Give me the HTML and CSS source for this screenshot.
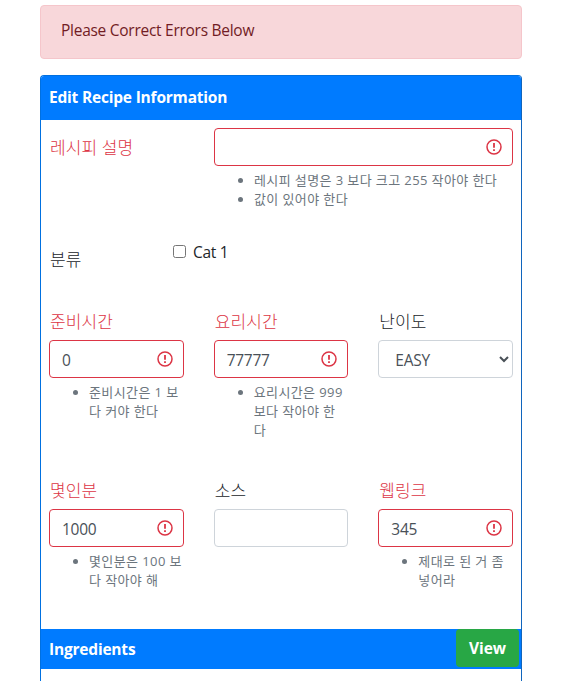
FILE: index.html
```html
<!DOCTYPE html>
<html lang="ko">
  <head>
    <meta charset="utf-8" />
    <title>Recipe Form</title>
    <link rel="stylesheet" href="styles.css">
  </head>
  <body>
    <svg class="sprite" aria-hidden="true">
      <symbol id="error" viewBox="0 0 16 16">
        <circle cx="8" cy="8" r="7" fill="none" stroke="#dc3545" stroke-width="1.5" />
        <path d="M8 4v4.8" stroke="#dc3545" stroke-width="1.8" />
        <path d="M8 10.2v1.8" stroke="#dc3545" stroke-width="1.8" />
      </symbol>
    </svg>
    <div class="container">
      <div class="alert">Please Correct Errors Below</div>

      <form class="card">
        <div class="card-header"><h1 class="card-title">Edit Recipe Information</h1></div>

        <div class="card-body">
          <div class="row row-description">
            <label class="label invalid" for="description">레시피 설명</label>
            <div class="field wide">
              <div class="control">
                <input class="input is-invalid" type="text" id="description" />
                <svg class="icon"><use href="#error" /></svg>
              </div>
              <ul class="help">
                <li>레시피 설명은 3 보다 크고 255 작아야 한다</li>
                <li>값이 있어야 한다</li>
              </ul>
            </div>
          </div>

          <div class="row row-category">
            <span class="label">분류</span>
            <label class="check"><input type="checkbox" class="checkbox" /><span>Cat 1</span></label>
          </div>

          <div class="row row-fields">
            <div class="field">
              <label class="label invalid" for="prepTime">준비시간</label>
              <div class="control">
                <input class="input is-invalid" type="text" id="prepTime" value="0" />
                <svg class="icon"><use href="#error" /></svg>
              </div>
              <ul class="help">
                <li>준비시간은 1 보<br />다 커야 한다</li>
              </ul>
            </div>
            <div class="field">
              <label class="label invalid" for="cookTime">요리시간</label>
              <div class="control">
                <input class="input is-invalid" type="text" id="cookTime" value="77777" />
                <svg class="icon"><use href="#error" /></svg>
              </div>
              <ul class="help">
                <li>요리시간은 999<br />보다 작아야 한<br />다</li>
              </ul>
            </div>
            <div class="field">
              <label class="label" for="difficulty">난이도</label>
              <div class="control">
                <select class="input select" id="difficulty">
                  <option>EASY</option>
                </select>
              </div>
            </div>
          </div>

          <div class="row row-fields">
            <div class="field">
              <label class="label invalid" for="servings">몇인분</label>
              <div class="control">
                <input class="input is-invalid" type="text" id="servings" value="1000" />
                <svg class="icon"><use href="#error" /></svg>
              </div>
              <ul class="help">
                <li>몇인분은 100 보<br />다 작아야 해</li>
              </ul>
            </div>
            <div class="field">
              <label class="label" for="source">소스</label>
              <div class="control">
                <input class="input" type="text" id="source" />
              </div>
            </div>
            <div class="field">
              <label class="label invalid" for="url">웹링크</label>
              <div class="control">
                <input class="input is-invalid" type="text" id="url" value="345" />
                <svg class="icon"><use href="#error" /></svg>
              </div>
              <ul class="help">
                <li>제대로 된 거 좀<br />넣어라</li>
              </ul>
            </div>
          </div>
        </div>

        <div class="section-header">
          <h2 class="card-title">Ingredients</h2>
          <button class="btn" type="button">View</button>
        </div>
      </form>
    </div>
  </body>
</html>
```
FILE: styles.css
```css
* {
  box-sizing: border-box;
}

body {
  margin: 0;
  height: 681px;
  overflow: hidden;
  background: #fff;
  color: #212529;
  font-family: "Open Sans", "Noto Sans CJK KR", sans-serif;
  font-size: 15.5px;
  letter-spacing: -0.27px;
  line-height: 24px;
}

.sprite {
  display: none;
}

.container {
  width: 482px;
  margin-left: 40px;
  padding-top: 5px;
}

.alert {
  height: 54px;
  margin-bottom: 16px;
  padding: 12px 20px;
  border: 1px solid #f5c6cb;
  border-radius: 4px;
  background: #f8d7da;
  color: #721c24;
}

.card {
  height: 640px;
  border: 1px solid #0070e0;
  border-right-color: #1065bd;
  border-radius: 4px;
}

.card-header {
  display: flex;
  align-items: center;
  height: 44px;
  padding: 0 8px 3px;
  border-radius: 3px 3px 0 0;
  background: #007bff;
}

.card-title {
  margin: 0;
  color: #fff;
  font-size: 15.5px;
  font-weight: 700;
  letter-spacing: -0.2px;
}

.card-body {
  height: 509px;
  padding: 8px 8px 0;
}

.row {
  display: flex;
  gap: 30px;
}

.row-description {
  height: 113px;
}

.row-description > .label {
  flex: 0 0 135px;
  margin-top: 8px;
}

.row-category {
  height: 68px;
}

.row-category > .label {
  flex: 0 0 94px;
  margin-top: 7px;
}

.row-fields {
  height: 169px;
}

.field {
  flex: 1 1 0;
  min-width: 0;
}

.label {
  display: block;
  height: 24px;
  padding-left: 1px;
  font-size: 17px;
  font-weight: 300;
  letter-spacing: 0.1px;
}

.field .label {
  padding-top: 1px;
  margin-bottom: 7px;
}

.invalid {
  color: #dc3545;
}

.control {
  position: relative;
}

.input {
  display: block;
  width: 100%;
  height: 38px;
  padding: 2px 12px 0;
  border: 1px solid #ced4da;
  border-radius: 4px;
  background: #fff;
  color: #495057;
  font: inherit;
  letter-spacing: inherit;
}

.is-invalid {
  border-color: #dc3545;
}

.select {
  padding: 1px 0 0 12px;
}

/* error mark inside the input */
.icon {
  position: absolute;
  top: 11px;
  right: 11px;
  width: 16px;
  height: 16px;
}

.help {
  margin: 5px 0 0;
  padding-left: 40px;
  color: #6c757d;
  font-size: 13px;
  letter-spacing: 0.4px;
  line-height: 19px;
  white-space: nowrap;
}

.check {
  display: flex;
  align-items: flex-start;
  margin-top: -1px;
}

.checkbox {
  width: 13px;
  height: 13px;
  margin: 5px 7px 0 0;
}

.section-header {
  display: flex;
  justify-content: space-between;
  align-items: flex-start;
  height: 40px;
  padding: 0 2px 0 8px;
  background: #007bff;
}

.section-header .card-title {
  margin-top: 8px;
}

.btn {
  width: 63px;
  height: 38px;
  padding: 0;
  border: 0;
  border-radius: 4px;
  background: #28a745;
  color: #fff;
  font: inherit;
  font-weight: 700;
  letter-spacing: 0;
}
```
